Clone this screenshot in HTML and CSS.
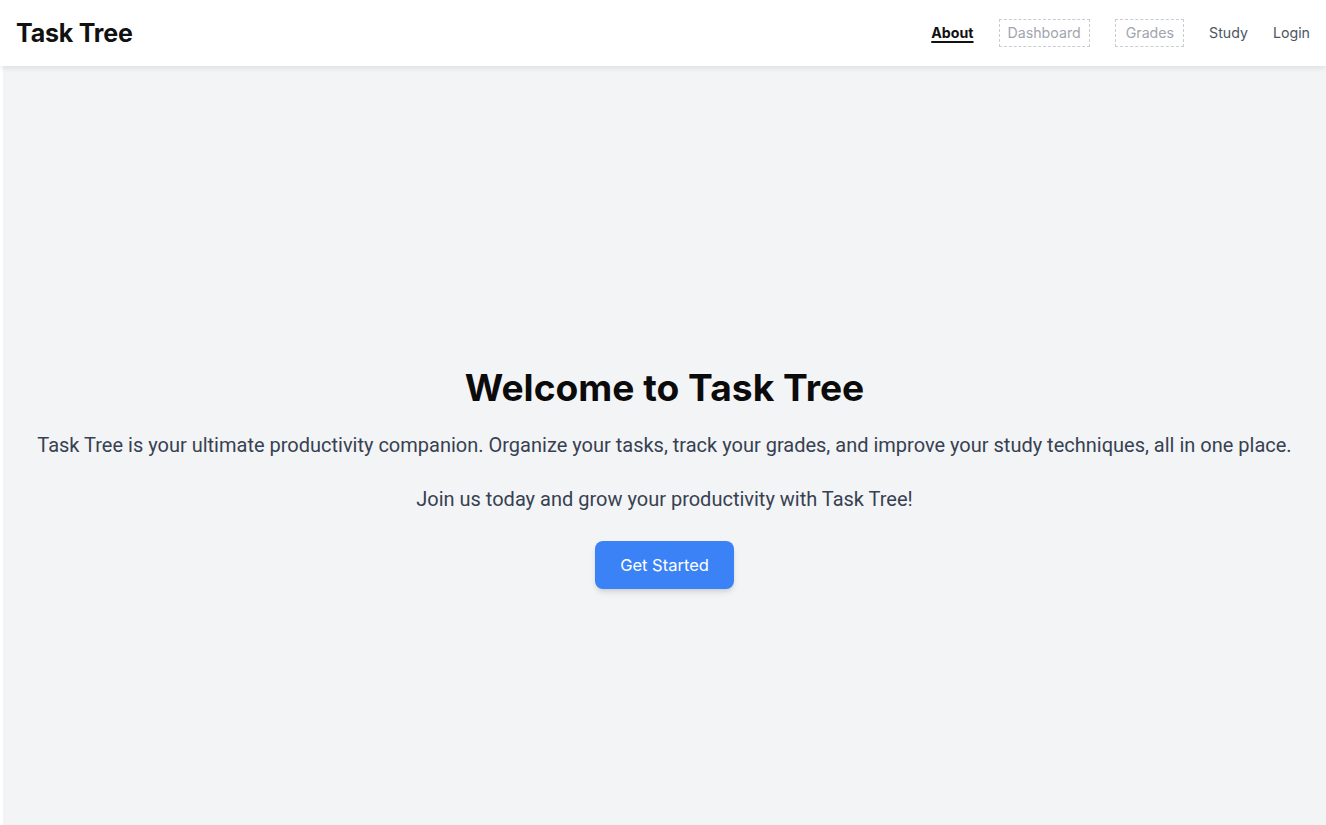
FILE: index.html
```html
<!DOCTYPE html>
<html lang="en">
<head>
<meta charset="utf-8">
<title>Task Tree</title>
<link rel="stylesheet" href="styles.css">
</head>
<body>
<header class="topbar">
  <div class="brand">Task Tree</div>
  <nav class="nav">
    <a class="nav-item active" href="#">About</a>
    <a class="nav-item disabled" href="#">Dashboard</a>
    <a class="nav-item disabled wide" href="#">Grades</a>
    <a class="nav-item" href="#">Study</a>
    <a class="nav-item" href="#">Login</a>
  </nav>
</header>
<main class="hero">
  <div class="hero-inner">
    <h1 class="hero-title">Welcome to Task Tree</h1>
    <p class="hero-text first">Task Tree is your ultimate productivity companion. Organize your tasks, track your grades, and improve your study techniques, all in one place.</p>
    <p class="hero-text second">Join us today and grow your productivity with Task Tree!</p>
    <a class="cta" href="#">Get Started</a>
  </div>
</main>
</body>
</html>
```
FILE: styles.css
```css
* { box-sizing: border-box; }
html, body { margin: 0; padding: 0; }
body {
  background: #ffffff;
  font-family: Inter, "Noto Sans", sans-serif;
  color: #111827;
}
.topbar {
  position: relative;
  z-index: 2;
  height: 66px;
  background: #ffffff;
  display: flex;
  align-items: center;
  justify-content: space-between;
  padding: 0 16px 0 16px;
  box-shadow: 0 2px 6px rgba(0,0,0,0.09);
}
.brand {
  font-size: 25px;
  font-weight: 700;
  color: #111111;
  letter-spacing: -0.2px;
}
.nav {
  display: flex;
  align-items: center;
  gap: 25px;
}
.nav-item {
  display: block;
  font-size: 14.2px;
  line-height: 20px;
  color: #4b5563;
  text-decoration: none;
}
.nav-item.active {
  color: #111111;
  font-weight: 700;
  text-decoration: underline;
  text-decoration-thickness: 2px;
  text-underline-offset: 3px;
}
.nav-item.disabled {
  color: #a0a5ae;
  padding: 3px 8px;
  border: 1px dashed #c9ccd2;
}
.nav-item.disabled.wide {
  padding: 3px 9px 3px 10px;
}
.hero {
  margin-left: 3px;
  min-height: 825px;
  background: #f3f4f6;
  display: flex;
  align-items: center;
  justify-content: center;
}
.hero-inner {
  text-align: center;
}
.hero-title {
  margin: 0 0 23px;
  font-size: 37.2px;
  line-height: 40px;
  font-weight: 700;
  color: #0b0b0b;
}
.hero-text {
  margin: 0;
  font-family: Roboto, "Noto Sans", sans-serif;
  font-size: 20px;
  line-height: 28px;
  color: #374151;
}
.hero-text.first { margin-bottom: 26px; }
.hero-text.second { margin-bottom: 28px; }
.cta {
  display: inline-block;
  background: #3b82f6;
  color: #ffffff;
  text-decoration: none;
  font-size: 16.5px;
  line-height: 24px;
  padding: 12px 25px;
  border-radius: 8px;
  box-shadow: 0 4px 6px -1px rgba(0,0,0,0.12), 0 2px 4px -2px rgba(0,0,0,0.1);
}
```
